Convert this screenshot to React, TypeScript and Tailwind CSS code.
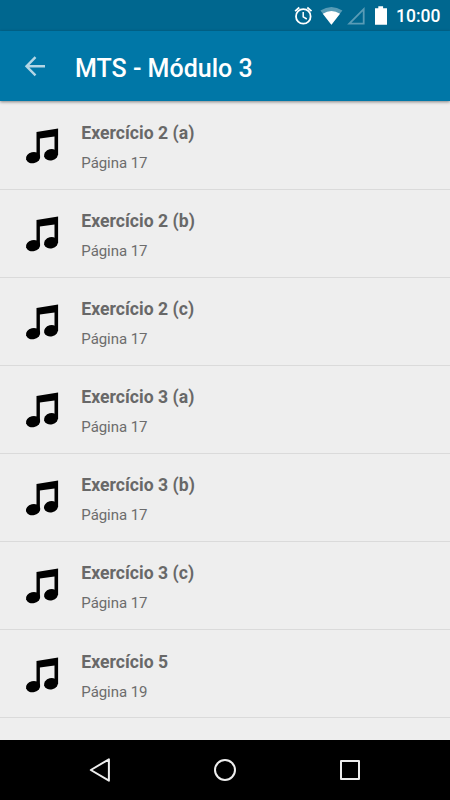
import React from "react";

const exercises = [
  { title: "Exercício 2 (a)", page: "Página 17" },
  { title: "Exercício 2 (b)", page: "Página 17" },
  { title: "Exercício 2 (c)", page: "Página 17" },
  { title: "Exercício 3 (a)", page: "Página 17" },
  { title: "Exercício 3 (b)", page: "Página 17" },
  { title: "Exercício 3 (c)", page: "Página 17" },
  { title: "Exercício 5", page: "Página 19" },
];

function MusicNote() {
  return (
    <svg width="36" height="40" viewBox="24 126 36 40" className="shrink-0" fill="#000">
      <path d="M36.5 132 58.1 128.6V155H54.5V136.4L39.9 138.6V158H36.5Z" />
      <ellipse cx="33.1" cy="157.6" rx="7.2" ry="5.6" transform="rotate(-14 33.1 157.6)" />
      <ellipse cx="51" cy="154.8" rx="7.1" ry="5.6" transform="rotate(-14 51 154.8)" />
    </svg>
  );
}

function StatusBar() {
  return (
    <div className="flex h-[31px] shrink-0 justify-end bg-[#00678f]">
      <svg width="102" height="31" viewBox="290 0 102 31" fill="none">
        <circle cx="303.3" cy="16.4" r="7.3" stroke="#fff" strokeWidth="1.8" />
        <path d="M303.2 12v4.8l3.6 2.2" stroke="#fff" strokeWidth="1.5" />
        <path d="m295.1 11.1 4.2-3.6M311.5 11.1l-4.2-3.6" stroke="#fff" strokeWidth="1.8" />
        <path d="M320.4 10.6Q331.5 3.4 342.4 10.6L331.4 24.8Z" fill="#fff" fillOpacity=".35" />
        <path d="M322.8 13.8Q331.5 8.4 340 13.8L331.4 24.8Z" fill="#fff" />
        <path d="M349.3 23.7H363.7V9.2Z" stroke="#fff" strokeOpacity=".35" strokeWidth="1.8" />
        <path d="M378.3 6.2h4.8v2h3.9v16.6h-12V8.2h3.3Z" fill="#fff" />
      </svg>
      <span className="w-[58px] pl-[4px] pt-[6px] text-[17.5px] leading-[21px] font-medium text-white">
        10:00
      </span>
    </div>
  );
}

export default function App() {
  return (
    <main className="flex h-[800px] w-[450px] flex-col overflow-hidden bg-[#eeeeee] font-['Roboto','Noto_Sans',sans-serif]">
      <StatusBar />
      <header className="z-10 flex h-[70px] shrink-0 items-center bg-[#0077a7] pl-[24px] shadow-[0_1px_3px_rgba(0,0,0,0.45)]">
        <svg width="24" height="24" viewBox="0 0 24 24" fill="none" stroke="#b3d6e5" strokeWidth="2.4">
          <path d="M21 12.3H2.8M11.5 3.2 2.5 12.3l9 9" />
        </svg>
        <h1 className="ml-[27px] pt-[5px] text-[25px] leading-[30px] font-medium whitespace-nowrap text-white">
          MTS - Módulo 3
        </h1>
      </header>
      <ul className="min-h-0 flex-1 overflow-hidden pt-[0.5px]">
        {exercises.map((item) => (
          <li key={item.title} className="flex h-[88.1px] items-start border-b border-[#dadada] pl-[24px]">
            <div className="pt-[24.5px]">
              <MusicNote />
            </div>
            <div className="pl-[21.3px] pt-[20.5px]">
              <h2 className="h-[22px] text-[17.6px] leading-[22px] font-bold tracking-[0.02px] whitespace-nowrap text-[#686868]">{item.title}</h2>
              <p className="mt-[9px] text-[15px] leading-[21px] tracking-[-0.05px] whitespace-nowrap text-[#6c6c6c]">{item.page}</p>
            </div>
          </li>
        ))}
      </ul>
      <nav className="flex h-[60px] shrink-0 bg-black">
        <svg width="450" height="60" viewBox="0 740 450 60" fill="none" stroke="#eee" strokeWidth="2" strokeLinejoin="round">
          <path d="M108.9 759.3V780.7L90.8 770Z" />
          <circle cx="225" cy="770" r="10" />
          <rect x="341" y="761" width="18" height="18" />
        </svg>
      </nav>
    </main>
  );
}
